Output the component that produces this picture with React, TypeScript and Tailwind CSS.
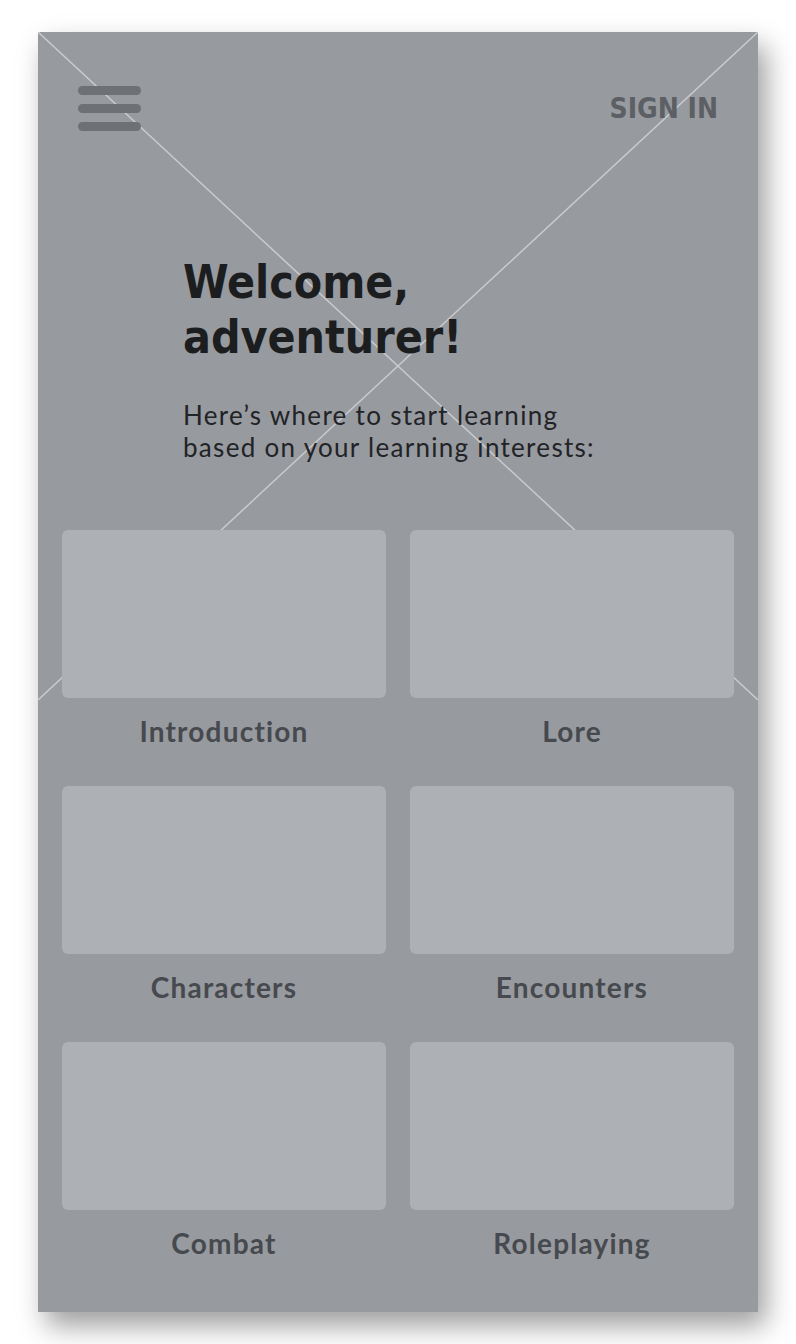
const topics = [
  "Introduction",
  "Lore",
  "Characters",
  "Encounters",
  "Combat",
  "Roleplaying",
];

const Hamburger = () => (
  <div className="flex w-[63px] flex-col gap-[9px]">
    <span className="h-[9px] rounded-full bg-[#6d7075]" />
    <span className="h-[9px] rounded-full bg-[#6d7075]" />
    <span className="h-[9px] rounded-full bg-[#6d7075]" />
  </div>
);

const Placeholder = () => (
  <svg
    className="absolute left-0 top-0 h-[668px] w-full"
    viewBox="0 0 720 668"
    preserveAspectRatio="none"
  >
    <line x1="0" y1="0" x2="720" y2="668" stroke="#c9cbce" strokeWidth="1.5" />
    <line x1="720" y1="0" x2="0" y2="668" stroke="#c9cbce" strokeWidth="1.5" />
  </svg>
);

export default function App() {
  return (
    <div className="min-h-[1344px] bg-white pl-[38px] pt-[32px]">
      <div className="relative h-[1280px] w-[720px] overflow-hidden bg-[#979a9f] shadow-[8px_14px_26px_rgba(0,0,0,0.38)]">
        <Placeholder />

        <div className="relative">
          <header className="flex items-center justify-between px-[40px] pt-[54px]">
            <Hamburger />
            <span className="font-['DejaVu_Sans_Condensed','Roboto',sans-serif] text-[28px] font-bold text-[#5c5f64]">
              SIGN IN
            </span>
          </header>

          <section className="mt-[124px] pl-[145px]">
            <h1 className="font-['DejaVu_Sans_Condensed','Roboto',sans-serif] text-[46px] font-bold leading-[55px] text-[#1c1d1f]">
              Welcome,
              <br />
              adventurer!
            </h1>
            <p className="mt-[34px] font-['Lato',sans-serif] text-[26px] leading-[32px] tracking-[1.3px] text-[#222326]">
              Here’s where to start learning
              <br />
              based on your learning interests:
            </p>
          </section>

          <div className="mt-[67px] grid grid-cols-2 gap-x-[24px] px-[24px]">
            {topics.map((topic) => (
              <div key={topic} className="flex h-[256px] flex-col">
                <div className="h-[168px] rounded-[6px] bg-[#adb0b5]" />
                <p className="mt-[15px] text-center font-['Lato',sans-serif] text-[28px] font-bold leading-[36px] tracking-[1.2px] text-[#46494e]">
                  {topic}
                </p>
              </div>
            ))}
          </div>
        </div>
      </div>
    </div>
  );
}
